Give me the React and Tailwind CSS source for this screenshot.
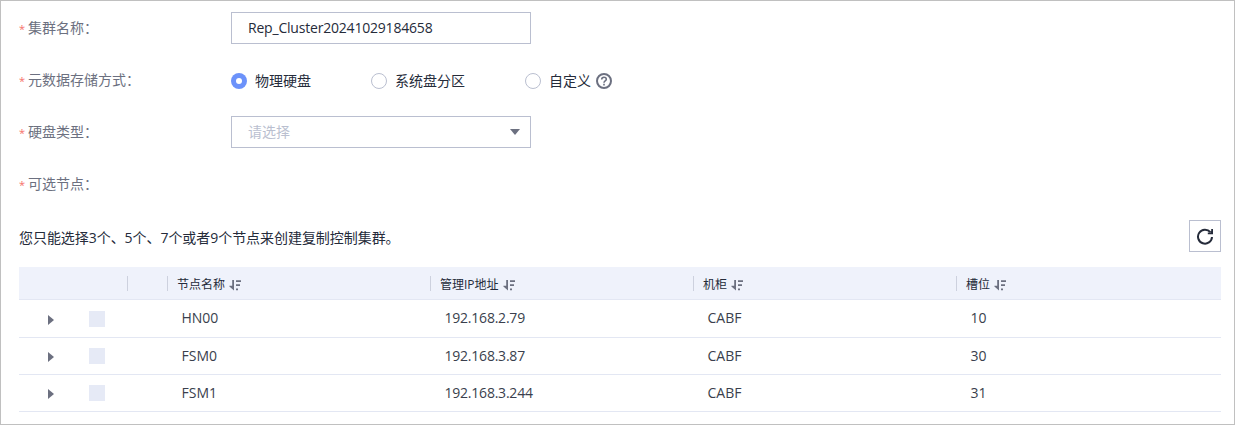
import React from "react";

const FONT = "font-['Open_Sans','Noto_Sans_CJK_SC',sans-serif] [font-weight:385]";

const rows = [
  { name: "HN00", ip: "192.168.2.79", cabinet: "CABF", slot: "10" },
  { name: "FSM0", ip: "192.168.3.87", cabinet: "CABF", slot: "30" },
  { name: "FSM1", ip: "192.168.3.244", cabinet: "CABF", slot: "31" },
];

const columns = ["节点名称", "管理IP地址", "机柜", "槽位"];

function SortIcon() {
  return (
    <svg width="12" height="11" viewBox="0 0 12 11" className="mt-[2px] ml-1 shrink-0" fill="#6c7080">
      <path d="M3.2 0h1.8v10.5L0.4 6.4V5.8h2.8z" />
      <path d="M7 0.2h5v1.8H7zM7 4.2h4v1.8H7zM7 8.4h2v1.8H7z" />
    </svg>
  );
}

function FormRow({ label, children }) {
  return (
    <div className="flex h-8 items-center">
      <div className="flex w-[212px] items-center text-sm text-[#6c7080]">
        <span className="w-[9px] pt-px text-[11px] leading-none font-normal text-[#f66f6a]">*</span>
        <span>{label}：</span>
      </div>
      {children}
    </div>
  );
}

function Radio({ label, checked, className }) {
  return (
    <label className={`flex items-center gap-2 ${className || ""}`}>
      <span
        className={
          checked
            ? "flex size-4 items-center justify-center rounded-full bg-[#6c92fa]"
            : "size-4 rounded-full border border-[#babfd0] bg-white"
        }
      >
        {checked && <span className="size-1.5 rounded-full bg-white" />}
      </span>
      <span className="text-sm">{label}</span>
    </label>
  );
}

function HeaderCell({ children, last }) {
  return (
    <div className="flex h-8 items-center">
      <div className="flex flex-1 items-center pt-[3px] pl-[9px] text-xs">{children}</div>
      {!last && <div className="h-[15px] w-px bg-[#cdd1de]" />}
    </div>
  );
}

export default function App() {
  const grid = "grid grid-cols-[109px_40px_263px_263px_263px_264px]";
  return (
    <div className={`h-[425px] w-[1235px] border border-[#c0c0c0] bg-white pt-[11px] pr-[13px] pl-[18px] text-[#252b3a] ${FONT}`}>
      <div className="flex flex-col gap-5">
        <FormRow label="集群名称">
          <div className="flex h-8 w-[300px] items-center border border-[#babfd0] pl-4 text-sm tracking-[-0.2px]">
            Rep_Cluster20241029184658
          </div>
        </FormRow>
        <FormRow label="元数据存储方式">
          <div className="flex items-center pt-[2px]">
            <Radio label="物理硬盘" checked className="w-[140px]" />
            <Radio label="系统盘分区" className="w-[154px]" />
            <Radio label="自定义" />
            <svg width="16" height="16" viewBox="0 0 16 16" className="ml-[5px]" fill="none" stroke="#6c7080" strokeWidth="2">
              <circle cx="8" cy="8" r="7" />
              <path d="M5.7 6.5c0-3 4.6-3 4.6-.2 0 1.7-2.3 1.6-2.3 3.4M8 10.8v1.6" strokeWidth="1.6" />
            </svg>
          </div>
        </FormRow>
        <FormRow label="硬盘类型">
          <div className="flex h-8 w-[300px] items-center justify-between border border-[#babfd0] pr-[10px] pl-4 text-sm text-[#babfd0]">
            <span>请选择</span>
            <svg width="10" height="6" viewBox="0 0 10 6" fill="#6c7080">
              <path d="M0 0h10L5 6z" />
            </svg>
          </div>
        </FormRow>
        <FormRow label="可选节点" />
      </div>

      <div className="mt-5 flex h-8 items-center justify-between">
        <p className="pt-[3px] text-sm tracking-[-0.05px]">您只能选择3个、5个、7个或者9个节点来创建复制控制集群。</p>
        <button className="flex size-8 items-center justify-center border border-[#babfd0]">
          <svg width="18" height="18" viewBox="0 0 18 18" fill="none" stroke="#252b3a" strokeWidth="2">
            <path d="M16 10A7 7 0 1 1 14.4 5.2" />
            <path d="M17 2v5.2h-5.2V5.4h2.6L15.2 4V2z" fill="#252b3a" stroke="none" />
          </svg>
        </button>
      </div>

      <div className="mt-[15px]">
        <div className={`${grid} h-[33px] border-b border-[#e3e7f3] bg-[#eff2fb]`}>
          <HeaderCell />
          <HeaderCell />
          {columns.map((c, i) => (
            <HeaderCell key={c} last={i === 3}>
              {c}
              <SortIcon />
            </HeaderCell>
          ))}
        </div>
        {rows.map((r, i) => (
          <div
            key={r.name}
            className={`${grid} ${i === 0 ? "h-[38px]" : "h-[37px]"} items-center border-b border-[#e3e7f3] text-sm text-[#3a3f4d]`}
          >
            <div className="flex items-center pl-[29px]">
              <svg width="6" height="10" viewBox="0 0 6 10" fill="#6c7080" className="mt-[2px]">
                <path d="M0 0l6 5-6 5z" />
              </svg>
              <span className="ml-[35px] size-4 bg-[#e6eaf6]" />
            </div>
            <div />
            {[r.name, r.ip, r.cabinet, r.slot].map((value, j) => (
              <div
                key={j}
                className={`pl-[13.5px] ${i === 0 ? "pb-[2px]" : ""} ${j === 1 ? "tracking-[-0.22px]" : ""}`}
              >
                {value}
              </div>
            ))}
          </div>
        ))}
      </div>
    </div>
  );
}
